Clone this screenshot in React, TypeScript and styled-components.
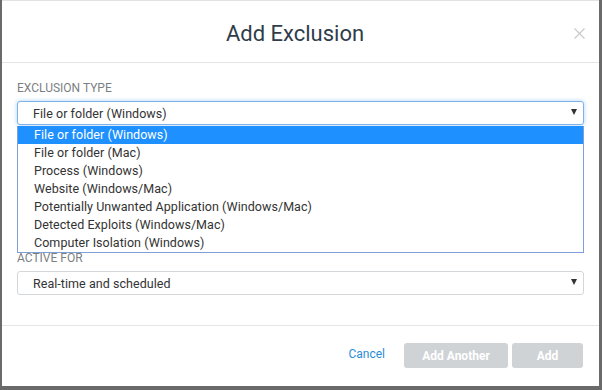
import React from "react";
import styled, { createGlobalStyle } from "styled-components";

const GlobalStyle = createGlobalStyle`
  html, body {
    margin: 0;
    padding: 0;
    background: #6a6a6a;
    font-family: Roboto, "Noto Sans", "Liberation Sans", sans-serif;
  }
  * { box-sizing: border-box; }
`;

const Modal = styled.div`
  width: 597px;
  height: 386px;
  margin-left: 2px;
  background: #fff;
  border-top: 1px solid #e2e2e2;
  display: flex;
  flex-direction: column;
`;

const Header = styled.div`
  height: 62px;
  flex-shrink: 0;
  border-bottom: 1px solid #e5e5e5;
  display: flex;
  align-items: center;
  padding: 0 14px 0 15px;
`;

const Title = styled.h1`
  flex: 1;
  margin: 3px 0 0 0;
  text-align: center;
  font-size: 22px;
  font-weight: 400;
  color: #2f3d4b;
`;

const Close = styled.button`
  border: none;
  background: none;
  padding: 0;
  width: 12px;
  height: 12px;
  margin-top: 3px;
  cursor: pointer;
  color: #c8c8c8;
  display: flex;
  align-items: center;
  justify-content: center;
`;

const Body = styled.div`
  flex: 1;
  padding: 18px 15px 0 15px;
  display: flex;
  flex-direction: column;
`;

const Field = styled.div<{ $space?: number }>`
  display: flex;
  flex-direction: column;
  margin-bottom: ${(p) => p.$space ?? 0}px;
  position: relative;
`;

const Label = styled.label`
  font-size: 12px;
  line-height: 15px;
  text-transform: uppercase;
  color: #7b7f83;
  margin-bottom: 5px;
`;

const SelectBox = styled.div<{ $focused?: boolean }>`
  height: 24px;
  border: 1px solid ${(p) => (p.$focused ? "#7fb2ea" : "#d4d7da")};
  border-radius: 3px;
  box-shadow: ${(p) => (p.$focused ? "0 0 4px rgba(102, 170, 235, 0.55)" : "none")};
  display: flex;
  align-items: center;
  padding: 0 6px 0 15px;
  font-size: 12.5px;
  letter-spacing: 0.05px;
  color: #333;
  background: #fff;
`;

const SelectText = styled.span`
  flex: 1;
`;

const Arrow = styled.span`
  width: 0;
  height: 0;
  border-left: 3.5px solid transparent;
  border-right: 3.5px solid transparent;
  border-top: 6px solid #333;
  margin-bottom: 2px;
`;

const Options = styled.ul`
  position: absolute;
  left: 0;
  right: 0;
  top: calc(100% + 1px);
  margin: 0;
  padding: 0;
  list-style: none;
  background: #fff;
  border: 1px solid #7f9fd8;
  border-top: none;
  z-index: 2;
`;

const Option = styled.li<{ $active?: boolean }>`
  height: 18px;
  line-height: 18px;
  padding-left: 16px;
  font-size: 12.5px;
  letter-spacing: 0.05px;
  color: ${(p) => (p.$active ? "#fff" : "#333")};
  background: ${(p) => (p.$active ? "#1e90ff" : "transparent")};
`;

const Footer = styled.div`
  height: 61px;
  flex-shrink: 0;
  border-top: 1px solid #e5e5e5;
  display: flex;
  align-items: center;
  justify-content: flex-end;
  padding: 0 16px 1px 0;
  gap: 4px;
`;

const LinkButton = styled.button`
  border: none;
  background: none;
  padding: 0;
  margin-right: 15px;
  margin-bottom: 3px;
  font-family: inherit;
  font-size: 12px;
  color: #2b8dd6;
  cursor: pointer;
`;

const Button = styled.button<{ $width: number }>`
  width: ${(p) => p.$width}px;
  height: 25px;
  border: none;
  border-radius: 3px;
  background: #cfd3d6;
  color: #fff;
  font-family: inherit;
  font-size: 12px;
  font-weight: 700;
  cursor: default;
`;

const exclusionTypes = [
  "File or folder (Windows)",
  "File or folder (Mac)",
  "Process (Windows)",
  "Website (Windows/Mac)",
  "Potentially Unwanted Application (Windows/Mac)",
  "Detected Exploits (Windows/Mac)",
  "Computer Isolation (Windows)",
];

export default function App() {
  return (
    <>
      <GlobalStyle />
      <Modal>
        <Header>
          <Title>Add Exclusion</Title>
          <Close aria-label="Close">
            <svg width="11" height="11" viewBox="0 0 11 11">
              <path d="M0.5 0.5 L10.5 10.5 M10.5 0.5 L0.5 10.5" stroke="currentColor" strokeWidth="1.1" />
            </svg>
          </Close>
        </Header>
        <Body>
          <Field $space={126}>
            <Label>Exclusion type</Label>
            <SelectBox $focused>
              <SelectText>{exclusionTypes[0]}</SelectText>
              <Arrow />
            </SelectBox>
            <Options>
              {exclusionTypes.map((t, i) => (
                <Option key={t} $active={i === 0}>
                  {t}
                </Option>
              ))}
            </Options>
          </Field>
          <Field>
            <Label>Active for</Label>
            <SelectBox>
              <SelectText>Real-time and scheduled</SelectText>
              <Arrow />
            </SelectBox>
          </Field>
        </Body>
        <Footer>
          <LinkButton>Cancel</LinkButton>
          <Button $width={104} disabled>
            Add Another
          </Button>
          <Button $width={71} disabled>
            Add
          </Button>
        </Footer>
      </Modal>
    </>
  );
}
